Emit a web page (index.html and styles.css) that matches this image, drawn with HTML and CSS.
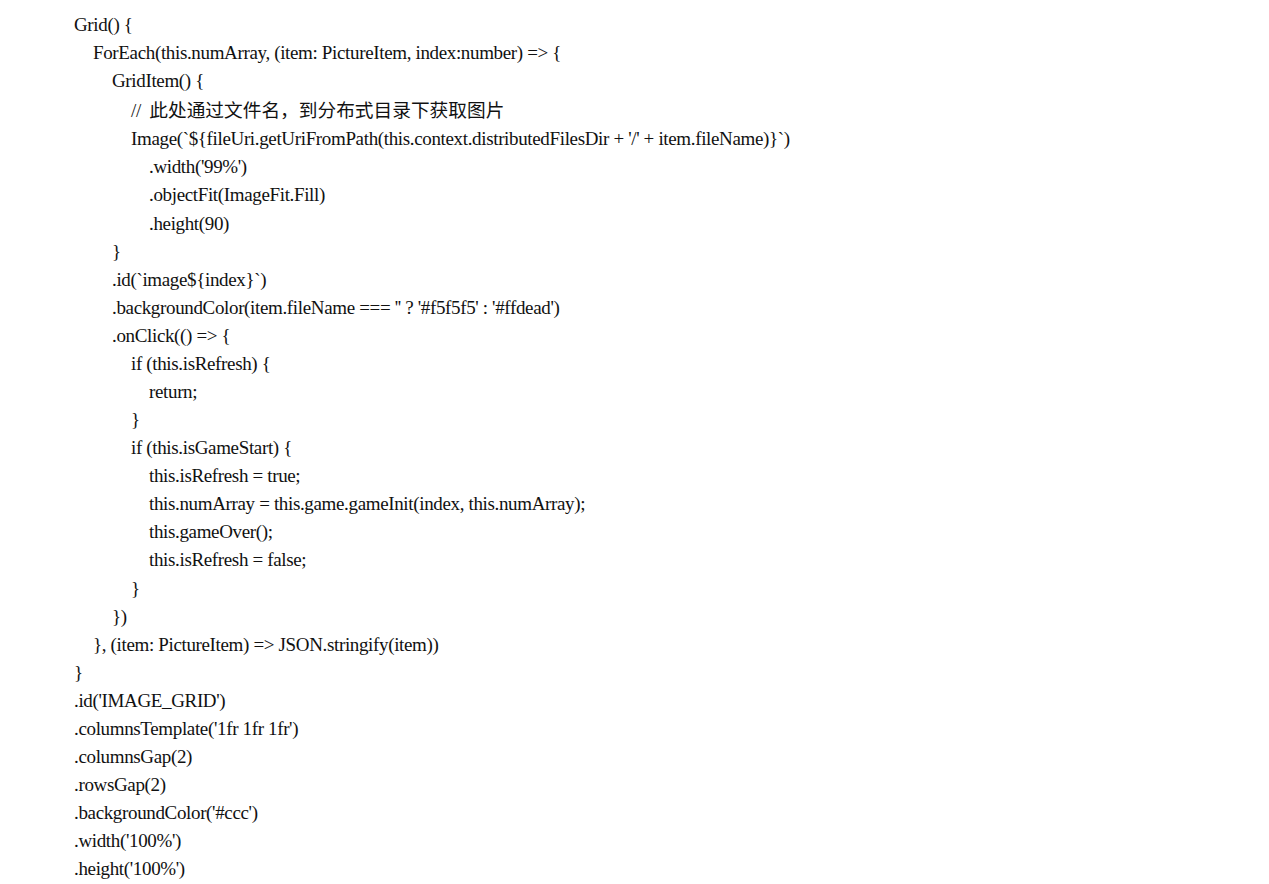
FILE: index.html
```html
<!DOCTYPE html>
<html lang="zh">
<head>
<meta charset="utf-8">
<link rel="stylesheet" href="styles.css">
</head>
<body>
<div class="code">
<div class="ln l0">Grid() {</div>
<div class="ln l1">ForEach(this.numArray, (item: PictureItem, index:number) =&gt; {</div>
<div class="ln l2">GridItem() {</div>
<div class="ln l3">// <span class="cjk">此处通过文件名，到分布式目录下获取图片</span></div>
<div class="ln l3">Image(`${fileUri.getUriFromPath(this.context.distributedFilesDir + '/' + item.fileName)}`)</div>
<div class="ln l4">.width('99%')</div>
<div class="ln l4">.objectFit(ImageFit.Fill)</div>
<div class="ln l4">.height(90)</div>
<div class="ln l2">}</div>
<div class="ln l2">.id(`image${index}`)</div>
<div class="ln l2">.backgroundColor(item.fileName === '' ? '#f5f5f5' : '#ffdead')</div>
<div class="ln l2">.onClick(() =&gt; {</div>
<div class="ln l3">if (this.isRefresh) {</div>
<div class="ln l4">return;</div>
<div class="ln l3">}</div>
<div class="ln l3">if (this.isGameStart) {</div>
<div class="ln l4">this.isRefresh = true;</div>
<div class="ln l4">this.numArray = this.game.gameInit(index, this.numArray);</div>
<div class="ln l4">this.gameOver();</div>
<div class="ln l4">this.isRefresh = false;</div>
<div class="ln l3">}</div>
<div class="ln l2">})</div>
<div class="ln l1">}, (item: PictureItem) =&gt; JSON.stringify(item))</div>
<div class="ln l0">}</div>
<div class="ln l0">.id('IMAGE_GRID')</div>
<div class="ln l0">.columnsTemplate('1fr 1fr 1fr')</div>
<div class="ln l0">.columnsGap(2)</div>
<div class="ln l0">.rowsGap(2)</div>
<div class="ln l0">.backgroundColor('#ccc')</div>
<div class="ln l0">.width('100%')</div>
<div class="ln l0">.height('100%')</div>
</div>
</body>
</html>
```
FILE: styles.css
```css
html, body {
  margin: 0;
  padding: 0;
  background: #ffffff;
}
.code {
  padding: 11px 0 0 74px;
  font-family: "Liberation Serif", "Noto Sans CJK SC", serif;
  font-size: 19px;
  line-height: 28.08px;
  color: #111111;
  letter-spacing: -0.35px;
}
.ln {
  white-space: pre;
}
.cjk {
  font-family: "Noto Sans CJK SC", sans-serif;
  font-size: 18.7px;
  letter-spacing: 0;
  padding-left: 4px;
}
.l1 { padding-left: 19px; }
.l2 { padding-left: 38px; }
.l3 { padding-left: 57px; }
.l4 { padding-left: 75px; }
```
